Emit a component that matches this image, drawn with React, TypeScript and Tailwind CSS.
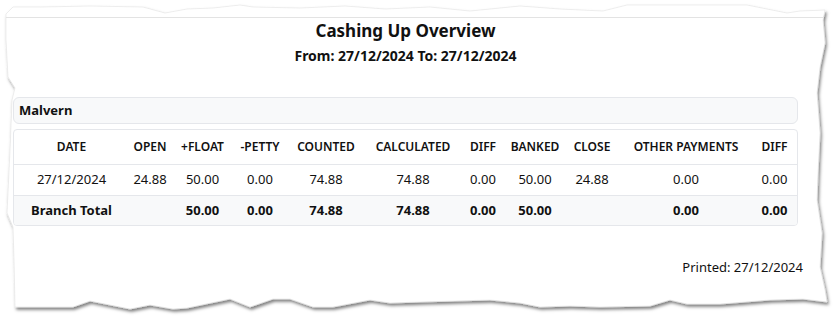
import React from "react";

const paperPoints = [
  [6, 14], [13, 7], [40, 7], [90, 6], [143, 7], [165, 13], [187, 9], [213, 8], [240, 5], [253, 7], [300, 8], [345, 6], [385, 9], [430, 7], [470, 11], [520, 6], [560, 9], [603, 11], [627, 5], [700, 5], [747, 5], [787, 13], [800, 11], [825, 10],
  [823, 20], [825, 43], [820, 67], [817, 93], [820, 133], [818, 173], [817, 200], [822, 233], [820, 267], [825, 290], [827, 302],
  [803, 299], [770, 300], [720, 304], [687, 304], [670, 300], [650, 306], [600, 307], [570, 306], [540, 307], [520, 303], [490, 300], [420, 302], [390, 303], [370, 300], [333, 307], [313, 307], [290, 299], [273, 299], [250, 307], [230, 299], [187, 308], [173, 309], [150, 305], [130, 309], [90, 301], [73, 307], [15, 307],
  [14, 260], [13, 227], [7, 213], [10, 150], [12, 100], [15, 88], [8, 77], [6, 40],
]
  .map((p) => p.join(","))
  .join(" ");

const cols = [115, 42, 63, 52, 80, 94, 46, 58, 56, 132, 45];
const headers = ["DATE", "OPEN", "+FLOAT", "-PETTY", "COUNTED", "CALCULATED", "DIFF", "BANKED", "CLOSE", "OTHER PAYMENTS", "DIFF"];
const row = ["27/12/2024", "24.88", "50.00", "0.00", "74.88", "74.88", "0.00", "50.00", "24.88", "0.00", "0.00"];
const total = ["Branch Total", "", "50.00", "0.00", "74.88", "74.88", "0.00", "50.00", "", "0.00", "0.00"];

export default function App() {
  return (
    <div
      className="relative w-[840px] h-[319px] overflow-hidden bg-white text-[#111]"
      style={{ fontFamily: '"Noto Sans", "Open Sans", sans-serif' }}
    >
      <svg className="absolute inset-0" width="840" height="319" viewBox="0 0 840 319">
        <defs>
          <filter id="paperShadow" x="-5%" y="-5%" width="110%" height="115%">
            <feDropShadow dx="1.5" dy="2.5" stdDeviation="1.8" floodColor="#000" floodOpacity="0.5" />
          </filter>
        </defs>
        <polygon points={paperPoints} fill="#fff" stroke="#e2e2e2" strokeWidth="0.6" filter="url(#paperShadow)" />
      </svg>

      <div className="relative pt-[17px]">
        <div className="ml-[6px] w-[818px] border-t border-[#e3e3e3]" />
        <div className="pl-[13px] w-[803px] flex flex-col">
          <div className="mr-[5px] flex flex-col items-center">
            <div className="text-[17px] leading-[24px] font-bold mt-[1px]">Cashing Up Overview</div>
            <div className="text-[14px] leading-[18px] font-bold mt-[4px]">From: 27/12/2024 To: 27/12/2024</div>
          </div>

          <div className="mr-[5px] mt-[32px] h-[27px] flex items-center px-[5px] bg-[#f8f9fa] border border-[#e5e7eb] rounded-[6px]">
            <span className="text-[13px] font-bold">Malvern</span>
          </div>

          <div className="mr-[5px] mt-[5px] border border-[#e5e7eb] rounded-[4px] overflow-hidden">
            <table className="w-full table-fixed border-collapse text-[13px]">
              <colgroup>
                {cols.map((w, i) => (
                  <col key={i} style={{ width: w }} />
                ))}
              </colgroup>
              <thead>
                <tr className="h-[34px] border-b border-[#e5e7eb]">
                  {headers.map((h, i) => (
                    <th key={i} className="p-0 text-center text-[12px] font-semibold whitespace-nowrap">
                      {h}
                    </th>
                  ))}
                </tr>
              </thead>
              <tbody>
                <tr className="h-[31px] border-b border-[#e5e7eb]">
                  {row.map((c, i) => (
                    <td key={i} className="p-0 text-center whitespace-nowrap">
                      {c}
                    </td>
                  ))}
                </tr>
                <tr className="h-[30px] bg-[#f8f9fa]">
                  {total.map((c, i) => (
                    <td key={i} className="p-0 text-center font-bold whitespace-nowrap">
                      {c}
                    </td>
                  ))}
                </tr>
              </tbody>
            </table>
          </div>

          <div className="mt-[32px] flex justify-end text-[13px] leading-[18px]">Printed: 27/12/2024</div>
        </div>
      </div>
    </div>
  );
}
